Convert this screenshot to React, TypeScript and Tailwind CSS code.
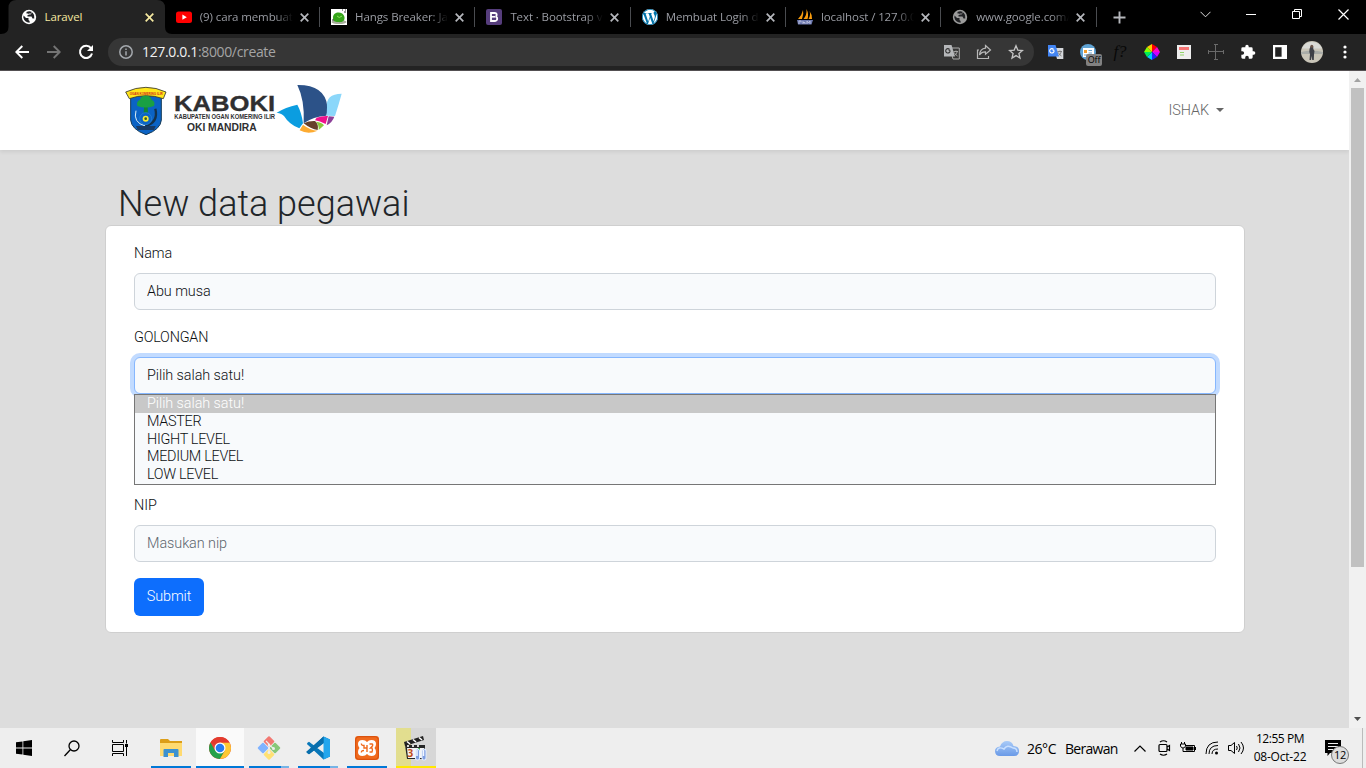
import React from "react";
import { SiWordpress } from "react-icons/si";

const page = "font-['Roboto',sans-serif] font-light";
const ui = "font-['Open_Sans','Noto_Sans',sans-serif]";

function Globe({ c }: { c: string }) {
  return (
    <svg width="16" height="16" viewBox="0 0 16 16">
      <circle cx="8" cy="8" r="7.2" fill={c} />
      <path d="M2.600 6.500L5 9H7.500V11L8.600 12V13.800Q3.500 13.500 2.300 8.500Z M5.500 3Q8 1.800 10.500 2.700V4.500H8V6H6.500V7.500H10.500L11.500 9.500H13.300Q14 6 11.500 3.500L9.500 5.500H7.500V4.500H5.500Z" fill="#202124" />
    </svg>
  );
}
function YouTube() {
  return (
    <svg width="16" height="16" viewBox="0 0 16 16">
      <rect x="0" y="2.500" width="16" height="11.500" rx="2.500" fill="#f00" />
      <path d="M6.400 5.600V10.800L10.800 8.200Z" fill="#fff" />
    </svg>
  );
}
function Hangs() {
  return (
    <svg width="16" height="16" viewBox="0 0 16 16">
      <rect width="16" height="16" fill="#fff" />
      <ellipse cx="8" cy="13" rx="7.500" ry="2" fill="#a9ad9c" />
      <path d="M2 9C2 2 12 2 13.500 8C14 13 10 13.500 7 13C4 13 2 12 2 9Z" fill="#36a51b" />
      <path d="M6 7Q8 10 11 7" stroke="#8de45f" fill="none" />
      <path d="M11 1H12M13 3H15M14 1H15M1 11H3" stroke="#333" />
    </svg>
  );
}
function Bootstrap() {
  return (
    <svg width="16" height="16" viewBox="0 0 16 16">
      <rect width="16" height="16" rx="2" fill="#563d7c" />
      <path d="M5 4H8.500Q10.800 4 10.700 6Q10.600 7.400 9.500 7.700Q11.300 8 11.200 10Q11 12 8.500 12H5Z" stroke="#fff" strokeWidth="1.800" fill="none" />
      <path d="M5 7.800H9" stroke="#fff" strokeWidth="1.600" />
    </svg>
  );
}
function WordPress() {
  return (
    <span className="flex size-4 items-center justify-center rounded-full bg-white text-[#0073aa]">
      <SiWordpress size={16} />
    </span>
  );
}
function PhpMyAdmin() {
  return (
    <svg width="16" height="16" viewBox="0 0 16 16">
      <path d="M6 1Q7 5 5 10H1Q5 6 6 1ZM9.500 0Q12 5 10.500 10H6.500Q10 6 9.500 0ZM12.500 2Q15.500 6 15 10H11.500Q14 6 12.500 2Z" fill="#f89c0e" />
      <path d="M0 11H16L14.500 15.500H1Z" fill="#6c78af" />
      <path d="M2 15V12H4V13.500M6 15V12M6 13.500H8V15M10 15V12L11.500 14L13 12V15" stroke="#c9cce5" strokeWidth=".8" fill="none" />
    </svg>
  );
}

const tabs = [
  { icon: <Globe c="#fff" />, title: "Laravel" },
  { icon: <YouTube />, title: "(9) cara membuat" },
  { icon: <Hangs />, title: "Hangs Breaker: Jam" },
  { icon: <Bootstrap />, title: "Text · Bootstrap v5" },
  { icon: <WordPress />, title: "Membuat Login da" },
  { icon: <PhpMyAdmin />, title: "localhost / 127.0.0.1" },
  { icon: <Globe c="#9b9b9b" />, title: "www.google.com/" },
];

function TabStrip() {
  return (
    <div className="flex h-[34px] bg-black pl-[9.500px]">
      {tabs.map((t, i) => (
        <div key={t.title} className={`relative flex h-[34px] w-[155.3px] shrink-0 items-center pl-[11px] ${i ? "text-[#9a9ca3]" : "text-[#f5e9a0]"}`}>
          {i === 0 && (
            <svg className="absolute -left-[9px] top-0" width="173" height="34" viewBox="0 0 173 34">
              <path d="M0 34Q7.500 34 7.500 27V8Q7.500 0 15.500 0H156Q164 0 164 8V27Q164 34 171 34Z" fill="#232323" />
            </svg>
          )}
          <span className="relative size-4 shrink-0">{t.icon}</span>
          <span className={`relative ml-2 w-[94px] overflow-hidden whitespace-nowrap text-[11.500px] leading-[18px] tracking-[-0.1px] ${ui} ${i ? "[mask-image:linear-gradient(to_right,black_80%,transparent_99%)]" : ""}`}>
            {t.title}
          </span>
          <svg className="relative ml-[6px] shrink-0" width="9" height="9" viewBox="0 0 9 9">
            <path d="M.7.7L8.300 8.300M8.300.7L.7 8.300" stroke={i ? "#b5b7bc" : "#f5e9a0"} strokeWidth="1.700" />
          </svg>
          {i > 0 && <span className="absolute right-0 top-[7px] h-5 w-px bg-[#4a4c50]" />}
        </div>
      ))}
      <div className="flex w-[45px] items-center justify-center">
        <svg width="13" height="13" viewBox="0 0 13 13"><path d="M6.500.5V12.500M.5 6.500H12.500" stroke="#b5b7bc" strokeWidth="1.900" /></svg>
      </div>
      <div className="ml-auto flex h-7">
        <div className="flex w-[46px] items-center justify-center"><svg width="11" height="7" viewBox="0 0 11 7"><path d="M.5.8L5.500 5.800L10.500.8" stroke="#ddd" fill="none" /></svg></div>
        <div className="flex w-[46px] items-center justify-center"><span className="h-px w-[10px] bg-white" /></div>
        <div className="flex w-[46px] items-center justify-center"><svg width="10" height="10" viewBox="0 0 10 10" stroke="#fff" fill="none"><path d="M.5 2.500H7.500V9.500H.5ZM2.500 2.500V.5H9.500V7.500H7.500" /></svg></div>
        <div className="flex w-[46px] items-center justify-center"><svg width="11" height="11" viewBox="0 0 11 11"><path d="M.5.5L10.500 10.500M10.500.5L.5 10.500" stroke="#fff" strokeWidth="1.200" /></svg></div>
      </div>
    </div>
  );
}

function Translate({ color }: { color?: boolean }) {
  return (
    <svg width="16" height="16" viewBox="0 0 16 16">
      <path d="M6 4H15.300V15H9Z" fill={color ? "#d6d8dc" : "none"} stroke={color ? "none" : "#aaa"} />
      <path d="M0 1H7.500L11 12.500H0Z" fill={color ? "#4285f4" : "#b5b7ba"} />
      <path d="M6 5.200H4.300M5.800 5.700A2.200 2.200 0 1 1 5.200 4.300" transform="translate(.3 1)" stroke={color ? "#fff" : "#333"} strokeWidth="1.100" fill="none" />
      <path d="M9.500 7.500H14M12 6.500V7.500M13.300 7.500Q12.800 10 10.800 11.500M10.300 8.500Q11.500 11 13.500 12" stroke={color ? "#777" : "#aaa"} strokeWidth=".9" fill="none" />
    </svg>
  );
}
function Cell({ children }: { children: React.ReactNode }) {
  return <div className="relative flex h-9 w-8 shrink-0 items-center justify-center">{children}</div>;
}

function Toolbar() {
  return (
    <div className="flex h-[37px] border-b border-[#555153] bg-[#232323] pl-[6px]">
      <Cell><svg width="14" height="14" viewBox="0 0 14 14"><path d="M14 7H1.500M7.300 1L1.300 7L7.300 13" stroke="#fff" strokeWidth="1.900" fill="none" /></svg></Cell>
      <Cell><svg width="14" height="14" viewBox="0 0 14 14"><path d="M0 7H12.500M6.700 1L12.700 7L6.700 13" stroke="#747474" strokeWidth="1.900" fill="none" /></svg></Cell>
      <Cell><svg width="16" height="16" viewBox="0 0 16 16"><path d="M13 4.200A6.100 6.100 0 1 0 14 9.500" stroke="#fff" strokeWidth="2" fill="none" /><path d="M15 1V7H9Z" fill="#fff" /></svg></Cell>
      <div className="ml-[6px] mt-1 flex h-7 w-[926px] items-center rounded-full bg-[#363636] pl-[11px]">
        <svg width="14" height="14" viewBox="0 0 14 14"><circle cx="7" cy="7" r="6.200" stroke="#a4a8ad" strokeWidth="1.500" fill="none" /><path d="M7 6.200V10.400M7 3.400V4.900" stroke="#a4a8ad" strokeWidth="1.500" /></svg>
        <span className={`ml-[9px] text-[14px] leading-5 tracking-[-0.35px] text-[#a5a5a5] ${ui}`}><span className="text-[#f1f1f1]">127.0.0.1</span>:8000/create</span>
        <div className="ml-auto flex pr-[2px]">
          <Cell><Translate /></Cell>
          <Cell><svg width="16" height="16" viewBox="0 0 16 16" fill="none" stroke="#b8b8b8" strokeWidth="1.200"><path d="M3 6H1.500V14.500H12.500V12" /><path d="M9.500 1.500L14.500 6L9.500 10.300V7.800Q5.500 7.700 3.500 11Q4 4.800 9.500 4.200Z" /></svg></Cell>
          <Cell><svg width="16" height="16" viewBox="0 0 16 16"><path d="M8 1.800L9.800 6.100L14.500 6.500L10.900 9.500L12 14.100L8 11.600L4 14.100L5.100 9.500L1.500 6.500L6.200 6.100Z" fill="none" stroke="#c4c4c4" strokeWidth="1.300" /></svg></Cell>
        </div>
      </div>
      <div className="ml-[6px] flex">
        <Cell><Translate color /></Cell>
        <Cell>
          <svg width="16" height="16" viewBox="0 0 16 16"><circle cx="8" cy="8" r="8" fill="#60a4d5" /><rect x="3" y="4" width="11" height="9" fill="#fff" /><path d="M4 6H7V9H4Z" fill="#ef9c2b" /><path d="M8.500 6.500H12M8.500 9H12M4 11H12" stroke="#69a6d1" /></svg>
          <span className={`absolute left-[14px] top-[20px] flex h-[12px] w-[16px] items-center justify-center rounded-[2px] bg-[#818181] text-[9px] leading-[12px] tracking-[-0.2px] text-black ${ui}`}>Off</span>
        </Cell>
        <Cell><span className="font-['Liberation_Serif',serif] text-[17px] italic leading-5 text-[#080808]">f?</span></Cell>
        <Cell>
          <svg width="16" height="16" viewBox="0 0 16 16"><path d="M8 8V0L13 3Z" fill="#f00" /><path d="M8 8L13 3L16 8Z" fill="#f0c" /><path d="M8 8H16L13 13Z" fill="#c0f" /><path d="M8 8L13 13L8 16Z" fill="#22f" /><path d="M8 8V16L3 13Z" fill="#0cf" /><path d="M8 8L3 13L0 8Z" fill="#0e5" /><path d="M8 8H0L3 3Z" fill="#8f0" /><path d="M8 8L3 3L8 0Z" fill="#fc0" /></svg>
        </Cell>
        <Cell><svg width="14" height="14" viewBox="0 0 14 14"><rect width="14" height="14" fill="#eee" /><path d="M2 2H12V5H2Z" fill="#f57474" /><path d="M3 7.500H7M3 10H7" stroke="#93d46a" /></svg></Cell>
        <Cell><svg width="16" height="16" viewBox="0 0 16 16" stroke="#6a6a6a" fill="none"><path d="M7.500 1V15M1 7.500H15M6 .5H10M6 15.500H10M.5 6V10M15.500 6V10" /></svg></Cell>
        <Cell><svg width="16" height="16" viewBox="0 0 24 24"><path fill="#fff" d="M20.500 11H19V7a2 2 0 0 0-2-2h-4V3.500a2.500 2.500 0 0 0-5 0V5H4a2 2 0 0 0-2 2v3.800h1.500a2.700 2.700 0 0 1 0 5.400H2V20a2 2 0 0 0 2 2h3.800v-1.500a2.700 2.700 0 0 1 5.400 0V22H17a2 2 0 0 0 2-2v-4h1.500a2.500 2.500 0 0 0 0-5Z" /></svg></Cell>
        <Cell><svg width="14" height="14" viewBox="0 0 14 14"><path d="M0 0H14V14H0ZM2.200 2.200V11.800H8.600V2.200Z" fill="#fff" fillRule="evenodd" /></svg></Cell>
        <Cell>
          <svg width="22" height="22" viewBox="0 0 22 22"><circle cx="11" cy="11" r="11" fill="#c9c5b8" /><path d="M1 7.500A11 11 0 0 1 21 7.500Z" fill="#d9dad6" /><path d="M0 11Q11 8 22 11V13H0Z" fill="#a9aca8" /><path d="M9.300 6H12.300V8L13.500 10L13 13.500L12.800 19H11.200L10.800 15L10 19H8.500L9 13L8.300 11L8.500 8Z" fill="#3e4047" /><circle cx="10.800" cy="5.300" r="1.500" fill="#6d5549" /></svg>
        </Cell>
        <Cell><svg className="ml-px" width="4" height="14" viewBox="0 0 4 14" fill="#fff"><circle cx="2" cy="2" r="1.600" /><circle cx="2" cy="7" r="1.600" /><circle cx="2" cy="12" r="1.600" /></svg></Cell>
      </div>
    </div>
  );
}

function Logo() {
  return (
    <svg width="223" height="54" viewBox="72 39 669 162">
      <path d="M92 78H184V150Q182 178 138 194Q94 178 92 150Z" fill="#0b63c5" stroke="#173b57" strokeWidth="3" />
      <path d="M77 66Q138 38 198 66L190 86Q138 68 88 86Z" fill="#ffe71b" stroke="#333" strokeWidth="2.500" />
      <text x="89" y="76" textLength="99" lengthAdjust="spacingAndGlyphs" fill="#d3271b" className="font-['Liberation_Sans',sans-serif] text-[13px] font-bold">OGAN KOMERING ILIR</text>
      <path d="M133 100H142L144 128H131Z" fill="#138431" />
      <path d="M112 108Q108 94 120 90Q122 76 137 77Q152 76 155 90Q167 94 162 108Q137 117 112 108Z" fill="#19a044" />
      <path d="M108 122Q98 158 136 168" stroke="#dff0f5" strokeWidth="3" fill="none" />
      <path d="M166 116Q176 157 136 168" stroke="#13324c" strokeWidth="7" fill="none" />
      <circle cx="137" cy="146" r="18" fill="#0b63c5" stroke="#2b86d8" strokeWidth="2" />
      <circle cx="137" cy="146" r="9" fill="#f6ea36" /><circle cx="137" cy="146" r="4" fill="#355c27" />
      <path d="M108 168H167L162 180H113Z" fill="#173a66" />
      <g fill="#2f2f31" className="font-['Liberation_Sans',sans-serif] font-bold">
        <text x="222" y="124" textLength="303" lengthAdjust="spacingAndGlyphs" className="text-[67px]" stroke="#2f2f31" strokeWidth="1">KABOKI</text>
        <text x="223" y="147" textLength="302" lengthAdjust="spacingAndGlyphs" className="text-[24px]">KABUPATEN OGAN KOMERING ILIR</text>
        <text x="261" y="182" textLength="209" lengthAdjust="spacingAndGlyphs" className="text-[31px]">OKI MANDIRA</text>
      </g>
      <path d="M530 128Q556 112 592 104Q605 128 609 160L598 175Q568 164 552 138Q546 130 530 128Z" fill="#0b9de0" />
      <path d="M592 45Q674 44 682 108Q684 124 679 137Q640 139 611 160Q615 92 592 45Z" fill="#2c5288" />
      <path d="M725 71Q676 72 681 112L680 137L705 138Q716 104 725 71Z" fill="#8bd7fa" />
      <path d="M650 143Q667 137 684 138L677 162Q659 153 645 151Z" fill="#ef118c" />
      <path d="M686 139L703 140Q697 157 680 166Z" fill="#8c3f98" />
      <path d="M611 160Q628 152 645 153Q657 163 653 180Q632 177 611 160Z" fill="#67402b" />
      <path d="M648 155Q666 157 672 166L656 180Q657 164 648 155Z" fill="#8bc83f" />
      <path d="M609 164Q630 180 653 182Q624 195 599 181Z" fill="#fdab31" />
    </svg>
  );
}

const fieldClass = "flex h-[37px] items-center rounded-[6px] border bg-[#f8fafc] px-3";

function Field({ label, value, muted }: { label: string; value: string; muted?: boolean }) {
  return (
    <div className="mb-4">
      <div className="mb-2 h-[23px] leading-[23px]">{label}</div>
      <div className={`${fieldClass} border-[#ced4da] ${muted ? "text-[#5c656d]" : ""}`}>{value}</div>
    </div>
  );
}

const options = ["MASTER", "HIGHT LEVEL", "MEDIUM LEVEL", "LOW LEVEL"];

function WebPage() {
  return (
    <div className="flex h-[657px] bg-[#ddd]">
      <div className={`flex-1 text-[14.4px] tracking-[-0.06px] text-[#0c0f12] ${page}`}>
        <div className="flex h-[79px] justify-between bg-white pl-[124px] pr-[125px] pt-3 shadow-[0_2px_4px_rgba(0,0,0,0.08)]">
          <Logo />
          <div className="mt-4 flex h-[23px] items-center text-[#666]">ISHAK
            <svg className="-mt-[2px] ml-[7px]" width="8" height="4" viewBox="0 0 8 4"><path d="M0 0H8L4 4Z" fill="#666" /></svg>
          </div>
        </div>
        <h1 className="h-[75px] pl-[118px] pt-[33px] text-[36px] leading-[43px] tracking-normal text-[#212529]">New data pegawai</h1>
        <div className="ml-[105px] h-[408px] w-[1140px] rounded-[6px] border border-[#cfcfcf] bg-white px-7 pt-4">
          <Field label="Nama" value="Abu musa" />
          <div className="relative mb-[100px]">
            <div className="mb-2 h-[23px] leading-[23px] tracking-[-0.2px]">GOLONGAN</div>
            <div className={`${fieldClass} border-[#86b7fe] shadow-[0_0_0_4px_#c2dbff]`}>Pilih salah satu!</div>
            <div className="absolute left-0 top-[68px] h-[91px] w-full border border-[#767676] bg-[#f8fafc] leading-[17.700px]">
              <div className="h-[18px] bg-[#c8c8c8] pl-3 text-white">Pilih salah satu!</div>
              {options.map((o) => <div key={o} className="h-[17.700px] pl-3 tracking-[-0.3px]">{o}</div>)}
            </div>
          </div>
          <Field label="NIP" value="Masukan nip" muted />
          <button className="flex h-[38px] w-[70px] items-center justify-center rounded-[6px] bg-[#0d6efd] text-white">Submit</button>
        </div>
      </div>
      <div className="flex w-[17px] flex-col items-center bg-[#f1f1f1]">
        <svg width="17" height="17" viewBox="0 0 17 17"><path d="M5 11H12L8.500 7Z" fill="#a3a3a3" /></svg>
        <div className="h-[479px] w-[13px] bg-[#c1c1c1]" />
        <svg className="mt-auto" width="17" height="17" viewBox="0 0 17 17"><path d="M5 6H12L8.500 10Z" fill="#505050" /></svg>
      </div>
    </div>
  );
}

function Task({ children, bar, bg = "" }: { children: React.ReactNode; bar: React.ReactNode; bg?: string }) {
  return (
    <div className={`flex h-10 w-12 flex-col items-center justify-between ${bg}`}>
      <div className="flex flex-1 items-center justify-center pt-px">{children}</div>
      {bar}
    </div>
  );
}
const bar = <div className="h-[2px] w-10 bg-[#0078d7]" />;
const splitBar = <div className="flex h-[2px] w-10"><div className="w-8 bg-[#0078d7]" /><div className="w-2 bg-[#76b4e6]" /></div>;

function Taskbar() {
  return (
    <div className={`flex h-10 bg-[#eee] text-black ${ui}`}>
      <div className="flex w-12 items-center justify-center"><svg width="16" height="16" viewBox="0 0 16 16"><path d="M0 2.300L6.500 1.400V7.500H0ZM7.300 1.300L16 0V7.500H7.300ZM0 8.400H6.500V14.600L0 13.700ZM7.300 8.400H16V16L7.300 14.700Z" /></svg></div>
      <div className="flex w-12 items-center justify-center"><svg width="16" height="17" viewBox="0 0 16 17" fill="none" stroke="#000" strokeWidth="1.300"><circle cx="10" cy="6" r="5" /><path d="M6.300 9.700L.5 16" /></svg></div>
      <div className="mr-[3px] flex w-12 items-center justify-center"><svg width="17" height="16" viewBox="0 0 17 16" fill="none" stroke="#000"><path d="M.5 0V2.500H11.500V0M.5 16V13.500H11.500V16M.5 4.500H11.500V11.500H.5ZM14.500 0V3.500M14.500 7V16" /><path d="M13 4H16V7H13Z" fill="#000" stroke="none" /></svg></div>
      <div className="flex gap-px">
        <Task bar={bar}>
          <svg width="22" height="20" viewBox="0 0 22 20"><path d="M0 2Q0 1 1 1H8L10 3H22V6H0Z" fill="#dc9e18" /><path d="M0 5H22V18H0Z" fill="#ffda70" /><path d="M3.500 19V12Q3.500 11 4.500 11H17.500Q18.500 11 18.500 12V19H14V15H8V19Z" fill="#3c91d0" /></svg>
        </Task>
        <Task bg="bg-[#fafafa]" bar={<div className="h-[2px] w-12 bg-[#0078d7]" />}>
          <svg width="22" height="22" viewBox="0 0 22 22"><circle cx="11" cy="11" r="11" fill="#ea4335" /><path d="M1.500 5.500A11 11 0 0 0 11 22L15.800 13.700L11 11L6.200 13.700Z" fill="#24a14a" /><path d="M11 22A11 11 0 0 0 20.500 5.500H11L15.800 13.700Z" fill="#fcc934" /><path d="M20.500 5.500H11L6.200 8.300L1.500 5.500A11 11 0 0 1 20.500 5.500Z" fill="#e33b2e" /><circle cx="11" cy="11" r="5.500" fill="#fff" /><circle cx="11" cy="11" r="4.300" fill="#267cf2" /></svg>
        </Task>
        <Task bar={splitBar}>
          <svg width="24" height="24" viewBox="0 0 24 24"><rect x="8" y="1.500" width="8" height="8" rx="1" transform="rotate(45 12 5.500)" fill="#f27872" /><rect x="2" y="8" width="8" height="8" rx="1" transform="rotate(45 6 12)" fill="#80b3ff" /><rect x="14" y="8" width="8" height="8" rx="1" transform="rotate(45 18 12)" fill="#87c779" /><rect x="8" y="14.500" width="8" height="8" rx="1" transform="rotate(45 12 18.500)" fill="#ffe174" /><path d="M9 5L12 8V16M12 9L16 12" stroke="#eee" strokeWidth="1.200" fill="none" /><circle cx="12" cy="9" r="1.300" fill="#eee" /><circle cx="16.500" cy="12.500" r="1.500" fill="#eee" /><circle cx="12" cy="16.500" r="1.500" fill="#eee" /></svg>
        </Task>
        <Task bar={splitBar}>
          <svg width="24" height="24" viewBox="0 0 24 24"><path d="M17.500.5L24 3.500V20.500L17.500 23.500L2 9Q0 8 1.500 6.800L3 5.700L18 17V7L3 18.300L1.500 17.200Q0 16 2 15Z" fill="#0877b9" /><path d="M17.500.5L24 3.500V20.500L17.500 23.500V.5Z" fill="#23a6ed" /><path d="M0 16L17.500.5V7L3 18.300Z" fill="#086eac" /></svg>
        </Task>
        <Task bar={bar}>
          <svg width="24" height="24" viewBox="0 0 24 24">
            <rect width="24" height="24" rx="3" fill="#f06a1d" /><rect x=".7" y=".7" width="22.600" height="22.600" rx="3" fill="none" stroke="#d64d0c" />
            <path d="M7.500 4Q3 4 3 8Q3 10.500 4.500 12Q3 13.500 3 16Q3 20 7.500 20Q10.500 20 12 18Q13.500 20 16.500 20Q21 20 21 16Q21 13.500 19.500 12Q21 10.500 21 8Q21 4 16.500 4Q13.500 4 12 6Q10.500 4 7.500 4Z" fill="#fff" />
            <path d="M6.500 7.500Q6 9.500 9 9.500V12H12.500M6.500 16.500Q6 14.500 9 14.500M12 16V9M14.500 8H17Q18 8 17.500 10L15.500 12H17Q18 14 17 16H14.500" stroke="#f06a1d" strokeWidth="1.400" fill="none" />
          </svg>
        </Task>
        <div className="ml-1 flex h-10 w-10 flex-col bg-gradient-to-r from-[#e2de8f] from-[38%] to-[#d7d7d7] to-[38%]">
          <div className="flex flex-1 items-center justify-center pt-1">
            <svg width="24" height="26" viewBox="0 0 24 26">
              <path d="M1 9H21V23H3Z" fill="#272727" />
              <path d="M3 12H20V22H4Z" fill="#f4f4f4" />
              <path d="M0 6L19 0L20 4L1 10Z" fill="#222" />
              <path d="M3 5.500L6 8M9 3.500L12 6M15 1.500L18 4M4 9V11M9 9V11M14 9V11" stroke="#fff" strokeWidth="1.600" />
              <text x="3.500" y="21" className="text-[10px] font-bold" fill="#c04a18">3</text>
              <path d="M14 12H16V20H14Z" fill="#35a845" />
              <path d="M13.500 15V22M20 15V22" stroke="#e4efff" strokeWidth="5" strokeLinecap="round" />
              <path d="M13.500 15V22M20 15V22" stroke="#7f9ee0" strokeWidth="3" strokeLinecap="round" />
              <path d="M13 14V20M19.500 14V20" stroke="#f2f7ff" strokeWidth="1.500" />
            </svg>
          </div>
          <div className="h-[2px] bg-[#ffe900]" />
        </div>
      </div>
      <div className="ml-auto flex items-center">
        <svg width="24" height="17" viewBox="0 0 24 17"><defs><linearGradient id="cloud" x2="0" y2="1"><stop stopColor="#a9cbf8" /><stop offset="1" stopColor="#6a9ae7" /></linearGradient></defs><path d="M5 16Q0 16 0 11Q0 7 5 6.500Q7 1 12 1Q17 1 18.500 6Q24 6 24 11Q24 16 19 16Z" fill="url(#cloud)" /><path d="M2 11Q3 6 9 9Q12 4 18 8Q22 8 22 12" stroke="#c9e0ff" strokeWidth="1.500" fill="none" /></svg>
        <span className="ml-2 w-[38px] whitespace-nowrap text-[14px] tracking-[-0.45px]">26°C</span>
        <span className="w-[63px] text-[14px] tracking-[-0.7px]">Berawan</span>
        <div className="flex w-6 justify-center"><svg width="12" height="7" viewBox="0 0 12 7"><path d="M.5 6.500L6 1L11.500 6.500" stroke="#000" strokeWidth="1.200" fill="none" /></svg></div>
        <div className="flex w-6 justify-center"><svg width="13" height="16" viewBox="0 0 13 16" fill="none" stroke="#000" strokeWidth="1.200"><rect x="1" y="4.500" width="8" height="7" rx="1" /><path d="M9 7L11.500 5.500V10.500L9 9M2 2Q5.500-.5 9 2M2 14Q5.500 16.500 9 14" /></svg></div>
        <div className="flex w-6 justify-center"><svg width="16" height="14" viewBox="0 0 16 14" fill="none" stroke="#000"><path d="M5 4.500H14.500V10.500H5M15.500 6V9M1.500 1V3M4.500 1V3M.5 3H5.500V5Q5 7 3 7Q1 7 .5 5ZM3 7V10.500H6" /><path d="M6 6H13V9H6Z" fill="#000" /></svg></div>
        <div className="flex w-6 justify-center"><svg width="14" height="14" viewBox="0 0 14 14" fill="none" stroke="#000"><path d="M1 13Q1 1 13 1M4 13Q4 4.500 13 4.500M7 13Q7 8 13 8" /><circle cx="11.500" cy="12" r="1.500" fill="#000" stroke="none" /></svg></div>
        <div className="flex w-6 justify-center"><svg width="17" height="14" viewBox="0 0 17 14" fill="none" stroke="#000"><path d="M.5 4.500H3L6.500 1.500V12.500L3 9.500H.5ZM8.500 5Q10 7 8.500 9M10.500 3Q13.500 7 10.500 11M13 1Q18 7 13 13" /></svg></div>
        <div className="flex w-[64px] flex-col items-center whitespace-nowrap text-[12px] leading-[18px] tracking-[-0.45px]"><span>12:55 PM</span><span className="tracking-[-0.2px]">08-Oct-22</span></div>
        <div className="relative flex w-[50px] pl-[13px]">
          <svg width="16" height="16" viewBox="0 0 16 16"><path d="M0 0H16V13H5L2.500 16V13H0Z" /><path d="M3 3.500H13M3 6.500H13M3 9.500H9" stroke="#eee" /></svg>
          <span className="absolute left-[19px] top-[6px] flex size-[18px] items-center justify-center rounded-full border border-[#777] bg-[#ddd] text-[11px] tracking-[-0.4px]">12</span>
        </div>
        <div className="mr-[3px] h-10 w-px bg-[#bbb]" />
      </div>
    </div>
  );
}

export default function App() {
  return (
    <div className="flex h-[768px] w-[1366px] flex-col overflow-hidden">
      <TabStrip />
      <Toolbar />
      <WebPage />
      <Taskbar />
    </div>
  );
}
